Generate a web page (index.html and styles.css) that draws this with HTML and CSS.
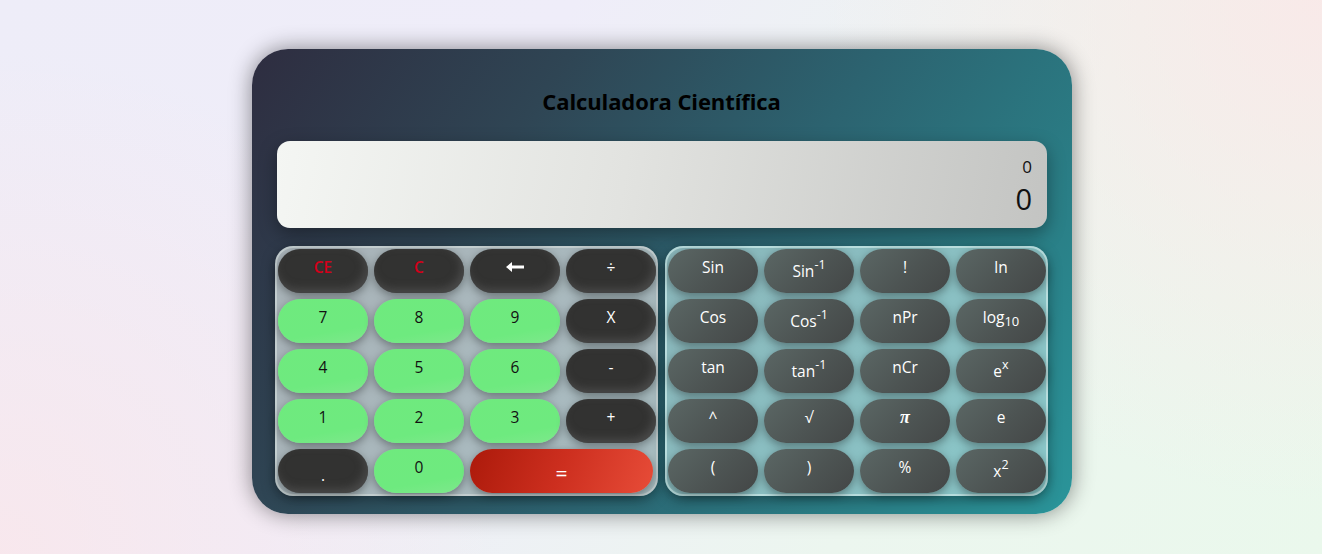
FILE: index.html
```html
<!DOCTYPE html>
<html lang="pt">
<head>
<meta charset="utf-8">
<title>Calculadora Científica</title>
<link rel="stylesheet" href="styles.css">
</head>
<body>
<div class="calc">
  <h1 class="title">Calculadora Científica</h1>
  <div class="display">
    <div class="expr">0</div>
    <div class="result">0</div>
  </div>
  <div class="pads">
    <div class="pad">
      <button class="btn dark red">CE</button>
      <button class="btn dark red">C</button>
      <button class="btn dark"><svg width="20" height="12" viewBox="0 0 20 12"><path d="M1 6 L7 1 L7 4.5 L19 4.5 L19 7.5 L7 7.5 L7 11 Z" fill="#fff"/></svg></button>
      <button class="btn dark">÷</button>
      <button class="btn green">7</button>
      <button class="btn green">8</button>
      <button class="btn green">9</button>
      <button class="btn dark">X</button>
      <button class="btn green">4</button>
      <button class="btn green">5</button>
      <button class="btn green">6</button>
      <button class="btn dark">-</button>
      <button class="btn green">1</button>
      <button class="btn green">2</button>
      <button class="btn green">3</button>
      <button class="btn dark">+</button>
      <button class="btn dark low">.</button>
      <button class="btn green">0</button>
      <button class="btn equals">=</button>
    </div>
    <div class="pad sci">
      <button class="btn grey">Sin</button>
      <button class="btn grey exp">Sin<sup>-1</sup></button>
      <button class="btn grey">!</button>
      <button class="btn grey">ln</button>
      <button class="btn grey">Cos</button>
      <button class="btn grey exp">Cos<sup>-1</sup></button>
      <button class="btn grey">nPr</button>
      <button class="btn grey">log<sub>10</sub></button>
      <button class="btn grey">tan</button>
      <button class="btn grey exp">tan<sup>-1</sup></button>
      <button class="btn grey">nCr</button>
      <button class="btn grey exp">e<sup>x</sup></button>
      <button class="btn grey">^</button>
      <button class="btn grey">√</button>
      <button class="btn grey pi">π</button>
      <button class="btn grey">e</button>
      <button class="btn grey">(</button>
      <button class="btn grey">)</button>
      <button class="btn grey">%</button>
      <button class="btn grey exp">x<sup>2</sup></button>
    </div>
  </div>
</div>
</body>
</html>
```
FILE: styles.css
```css
html, body {
  margin: 0;
  height: 100%;
}
body {
  font-family: "Open Sans", "Noto Sans", sans-serif;
  background:
    radial-gradient(circle at 100% 0%, rgba(250,232,232,0.9) 0, rgba(250,232,232,0) 35%),
    radial-gradient(circle at 0% 100%, rgba(250,230,234,0.8) 0, rgba(250,230,234,0) 35%),
    linear-gradient(120deg, #eeedf8 0%, #efedf9 35%, #ecf6ef 70%, #eaf8ec 100%);
  padding: 49px 0 0 2px;
  box-sizing: border-box;
}
.calc {
  width: 820px;
  height: 465px;
  margin: 0 auto;
  box-sizing: border-box;
  border-radius: 36px;
  background: linear-gradient(125deg, #2e2d40 0%, #2f4554 28%, #2c6370 55%, #2a7e86 80%, #2a959a 100%);
  box-shadow: 0 0 22px rgba(0,0,0,0.45);
  display: flex;
  flex-direction: column;
  align-items: stretch;
  padding: 0 24px 0 23px;
}
.title {
  margin: 0;
  height: 92px;
  line-height: 104px;
  text-align: center;
  font-size: 22px;
  font-weight: 700;
  color: #000;
  letter-spacing: -0.1px;
  box-sizing: border-box;
}
.display {
  margin: 0 1px 18px 2px;
  height: 87px;
  border-radius: 13px;
  background: linear-gradient(100deg, #f4f6f3 0%, #e2e3e0 45%, #c3c4c2 100%);
  box-shadow: 0 6px 18px rgba(0,0,0,0.35);
  display: flex;
  flex-direction: column;
  align-items: flex-end;
  padding: 14px 15px 0 0;
  box-sizing: border-box;
  color: #111;
}
.expr {
  font-size: 17px;
  line-height: 24px;
}
.result {
  font-size: 29px;
  line-height: 40px;
  font-weight: 400;
}
.pads {
  display: flex;
  gap: 7px;
}
.pad {
  width: 383px;
  height: 250px;
  box-sizing: border-box;
  border: 2px solid rgba(200,210,212,0.85);
  border-radius: 18px;
  background: rgba(200,210,213,0.8);
  padding: 1px;
  display: grid;
  grid-template-columns: repeat(4, 90px);
  grid-auto-rows: 44px;
  column-gap: 6px;
  row-gap: 6px;
  box-shadow: 0 4px 14px rgba(0,0,0,0.35);
}
.pad.sci {
  background: rgba(180,222,222,0.7);
  border-color: rgba(190,225,225,0.9);
}
.btn {
  border: none;
  margin: 0;
  border-radius: 22px;
  font-family: inherit;
  font-size: 15.5px;
  display: flex;
  align-items: center;
  justify-content: center;
  padding: 0 0 8px 0;
  box-shadow: 0 3px 10px rgba(0,0,0,0.38);
}
.dark {
  background: #323231;
  color: #fff;
  box-shadow: 0 3px 10px rgba(0,0,0,0.38), inset -3px -4px 8px rgba(90,90,90,0.6);
}
.red {
  color: #d4001a;
  font-weight: 600;
}
.green {
  background: linear-gradient(170deg, #6fea7e 0%, #6eea7f 70%, #7ee88c 100%);
  color: #111;
}
.low {
  padding: 8px 0 0 0;
}
.exp {
  padding: 0;
}
.equals {
  grid-column: span 2;
  width: 183px;
  background: linear-gradient(110deg, #ac1a0b 0%, #cd2f1f 50%, #e74c38 100%);
  color: #fff;
  font-size: 21px;
  padding: 4px 0 0 0;
}
.grey {
  background: linear-gradient(135deg, #5b6765 0%, #4d5453 55%, #434646 100%);
  color: #fff;
}
.btn sup {
  font-size: 12.5px;
  position: relative;
  top: -6px;
  line-height: 0;
  vertical-align: baseline;
}
.btn sub {
  font-size: 13px;
  position: relative;
  top: 4px;
  line-height: 0;
  vertical-align: baseline;
}
.pi {
  font-family: "Liberation Serif", serif;
  font-weight: 700;
  font-style: italic;
  font-size: 18px;
}
```
